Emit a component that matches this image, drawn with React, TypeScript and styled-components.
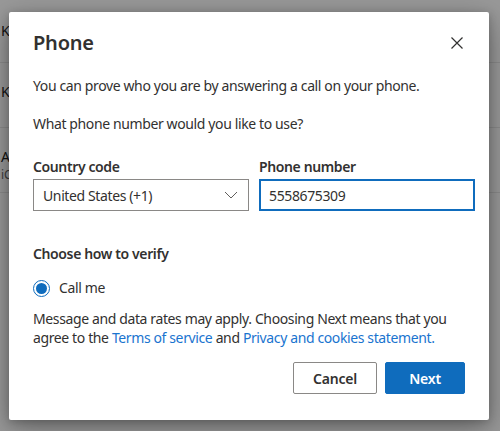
import React from "react";
import styled, { createGlobalStyle } from "styled-components";

const Global = createGlobalStyle`
  html, body { margin: 0; padding: 0; }
  body { width: 500px; height: 431px; overflow: hidden; background: #fff;
    font-family: "Noto Sans", "Open Sans", sans-serif; }
  * { box-sizing: border-box; }
`;

const Page = styled.div`
  position: relative;
  width: 500px;
  height: 431px;
  overflow: hidden;
  background: #fff;
`;

const BgList = styled.div`
  display: flex;
  flex-direction: column;
`;

const BgRow = styled.div`
  height: 65px;
  border-bottom: 1px solid #e8e8e8;
  padding: 20px 0 0 1px;
  font-size: 14px;
  color: #222;
  line-height: 18px;
  &:first-child { height: 63px; padding-top: 22px; }
`;

const BgSub = styled.div`
  font-size: 12px;
  color: #666;
`;

const Overlay = styled.div`
  position: absolute;
  inset: 0;
  background: rgba(0, 0, 0, 0.4);
`;

const Dialog = styled.div`
  position: absolute;
  left: 9px;
  top: 12px;
  width: 480px;
  height: 408px;
  background: #fff;
  border-radius: 2px;
  box-shadow: 0 8px 30px rgba(0, 0, 0, 0.35), 0 2px 8px rgba(0, 0, 0, 0.2);
  padding: 17px 15px 0 24px;
  color: #323130;
  letter-spacing: -0.38px;
  display: flex;
  flex-direction: column;
`;

const Header = styled.div`
  display: flex;
  justify-content: space-between;
  align-items: center;
  height: 28px;
  padding-right: 10px;
`;

const Title = styled.h1`
  margin: 0;
  font-size: 20px;
  font-weight: 600;
  line-height: 28px;
  letter-spacing: -0.2px;
`;

const CloseBtn = styled.button`
  border: 0;
  background: none;
  padding: 0;
  width: 14px;
  height: 14px;
  display: flex;
  cursor: pointer;
`;

const Para = styled.p<{ $top: number }>`
  margin: ${(p) => p.$top}px 0 0 0;
  font-size: 14px;
  line-height: 20px;
`;

const Fields = styled.div`
  display: grid;
  grid-template-columns: 216px 216px;
  column-gap: 10px;
  margin-top: 23px;
`;

const Field = styled.div`
  display: flex;
  flex-direction: column;
`;

const Label = styled.label`
  font-size: 14px;
  font-weight: 600;
  line-height: 20px;
  margin-bottom: 2px;
`;

const SelectBox = styled.div`
  height: 32px;
  border: 1px solid #8a8886;
  display: flex;
  align-items: center;
  justify-content: space-between;
  padding: 0 10px 0 9px;
  font-size: 14px;
`;

const Input = styled.div`
  height: 32px;
  border: 2px solid #0f6cbd;
  display: flex;
  align-items: center;
  padding: 0 8px;
  font-size: 14px;
`;

const SectionLabel = styled.div`
  font-size: 14px;
  font-weight: 600;
  line-height: 20px;
  margin-top: 33px;
`;

const RadioRow = styled.div`
  display: flex;
  align-items: center;
  gap: 9px;
  margin-top: 14px;
  font-size: 14px;
  line-height: 20px;
`;

const RadioOuter = styled.span`
  width: 17px;
  height: 17px;
  border-radius: 50%;
  border: 1px solid #0f6cbd;
  display: flex;
  align-items: center;
  justify-content: center;
`;

const RadioDot = styled.span`
  width: 11px;
  height: 11px;
  border-radius: 50%;
  background: #0f6cbd;
`;

const Notice = styled.p`
  margin: 11px 0 0 0;
  font-size: 14px;
  line-height: 19px;
`;

const Link = styled.a`
  color: #1a74cf;
  text-decoration: none;
`;

const Actions = styled.div`
  display: flex;
  justify-content: flex-end;
  gap: 8px;
  margin-top: 15px;
  padding-right: 9px;
`;

const Button = styled.button<{ $primary?: boolean }>`
  height: 32px;
  width: ${(p) => (p.$primary ? "80px" : "84px")};
  font-family: inherit;
  font-size: 14px;
  font-weight: 600;
  letter-spacing: -0.2px;
  border-radius: 2px;
  border: 1px solid ${(p) => (p.$primary ? "#0f6cbd" : "#8a8886")};
  background: ${(p) => (p.$primary ? "#0f6cbd" : "#fff")};
  color: ${(p) => (p.$primary ? "#fff" : "#323130")};
`;

export default function App() {
  return (
    <Page>
      <Global />
      <BgList>
        <BgRow>Kiosk</BgRow>
        <BgRow>Kiosk</BgRow>
        <BgRow>
          App
          <BgSub>iCloud</BgSub>
        </BgRow>
      </BgList>
      <Overlay />
      <Dialog>
        <Header>
          <Title>Phone</Title>
          <CloseBtn aria-label="Close">
            <svg width="14" height="14" viewBox="0 0 14 14">
              <path d="M1.5 1.5 L12.5 12.5 M12.5 1.5 L1.5 12.5" stroke="#323130" strokeWidth="1.2" fill="none" />
            </svg>
          </CloseBtn>
        </Header>
        <Para $top={19}>You can prove who you are by answering a call on your phone.</Para>
        <Para $top={18}>What phone number would you like to use?</Para>
        <Fields>
          <Field>
            <Label>Country code</Label>
            <SelectBox>
              <span>United States (+1)</span>
              <svg width="14" height="8" viewBox="0 0 14 8">
                <path d="M1 1 L7 7 L13 1" stroke="#605e5c" strokeWidth="1" fill="none" />
              </svg>
            </SelectBox>
          </Field>
          <Field>
            <Label>Phone number</Label>
            <Input>5558675309</Input>
          </Field>
        </Fields>
        <SectionLabel>Choose how to verify</SectionLabel>
        <RadioRow>
          <RadioOuter>
            <RadioDot />
          </RadioOuter>
          Call me
        </RadioRow>
        <Notice>
          Message and data rates may apply. Choosing Next means that you agree to the{" "}
          <Link href="#">Terms of service</Link> and <Link href="#">Privacy and cookies statement.</Link>
        </Notice>
        <Actions>
          <Button>Cancel</Button>
          <Button $primary>Next</Button>
        </Actions>
      </Dialog>
    </Page>
  );
}
